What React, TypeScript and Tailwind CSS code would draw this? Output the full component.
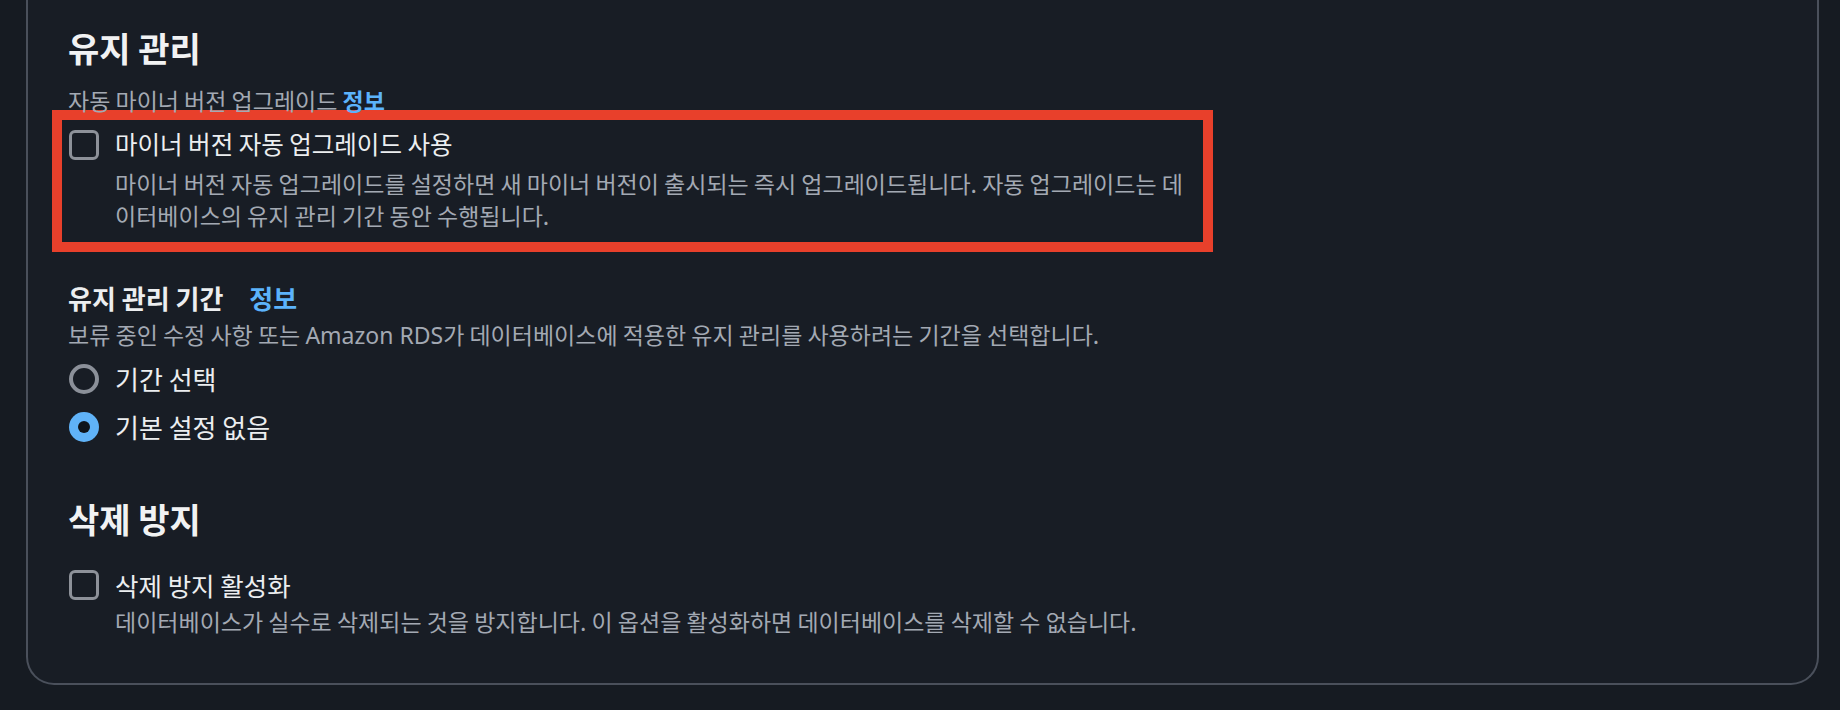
import React from "react";

function Checkbox() {
  return (
    <span className="mt-[1px] block h-[30px] w-[30px] shrink-0 rounded-[6px] border-[3px] border-[#8d9199]" />
  );
}

function Radio({ checked }: { checked?: boolean }) {
  if (checked) {
    return (
      <span className="flex h-[30px] w-[30px] shrink-0 items-center justify-center rounded-full bg-[#60b3f8]">
        <span className="h-[12px] w-[12px] rounded-full bg-[#0f141a]" />
      </span>
    );
  }
  return <span className="block h-[30px] w-[30px] shrink-0 rounded-full border-[4px] border-[#8b9099]" />;
}

export default function App() {
  return (
    <div className="min-h-screen bg-[#161b22] pl-[26px] pr-[21px] font-['Noto_Sans_CJK_KR','Noto_Sans',sans-serif]">
      <div className="rounded-b-[28px] border-2 border-t-0 border-[#4a505b] bg-[#181d25] pl-[40px] pt-[28px] pb-[46px]">
        {/* 유지 관리 */}
        <h2 className="text-[34px] leading-[40px] font-bold text-[#f1f2f3]">유지 관리</h2>
        <div className="mt-[20px] text-[23px] leading-[24px] text-[#a3a9b3]">
          자동 마이너 버전 업그레이드 <span className="font-bold text-[#5cb3fb]">정보</span>
        </div>

        {/* highlighted option */}
        <div className="-mt-[2px] -ml-[16px] w-[1161px] border-[10px] border-[#e8402b] pt-[8px] pb-[11px] pl-[7px]">
          <div className="flex gap-[16px]">
            <span className="mt-[2px] block h-[30px] w-[30px] shrink-0 rounded-[6px] border-[3px] border-[#8d9199]" />
            <div>
              <div className="text-[24.5px] leading-[32px] text-[#eceef0]">마이너 버전 자동 업그레이드 사용</div>
              <p className="mt-[7px] whitespace-nowrap text-[23px] leading-[32px] text-[#a3a9b3]">
                마이너 버전 자동 업그레이드를 설정하면 새 마이너 버전이 출시되는 즉시 업그레이드됩니다. 자동 업그레이드는 데
                <br />
                이터베이스의 유지 관리 기간 동안 수행됩니다.
              </p>
            </div>
          </div>
        </div>

        {/* 유지 관리 기간 */}
        <div className="mt-[30px] flex items-center gap-[26px] text-[26px] leading-[32px] font-bold">
          <span className="text-[#eceef0]">유지 관리 기간</span>
          <span className="text-[#5cb3fb]">정보</span>
        </div>
        <p className="mt-[4px] text-[23px] leading-[32px] text-[#a3a9b3]">
          보류 중인 수정 사항 또는 <span className="font-['Noto_Sans',sans-serif]">Amazon RDS</span>가 데이터베이스에 적용한 유지 관리를 사용하려는 기간을 선택합니다.
        </p>
        <div className="mt-[4px] flex flex-col">
          <label className="flex h-[48px] items-center gap-[16px] pl-[1px]">
            <Radio />
            <span className="text-[26px] leading-[32px] text-[#eceef0]">기간 선택</span>
          </label>
          <label className="flex h-[48px] items-center gap-[16px] pl-[1px]">
            <Radio checked />
            <span className="text-[26px] leading-[32px] text-[#eceef0]">기본 설정 없음</span>
          </label>
        </div>

        {/* 삭제 방지 */}
        <h2 className="mt-[48px] text-[34px] leading-[40px] font-bold text-[#f1f2f3]">삭제 방지</h2>
        <div className="mt-[30px] ml-[1px] flex gap-[16px]">
          <Checkbox />
          <div>
            <div className="text-[25.5px] leading-[32px] text-[#eceef0]">삭제 방지 활성화</div>
            <p className="mt-[4px] text-[23px] leading-[32px] text-[#a3a9b3]">
              데이터베이스가 실수로 삭제되는 것을 방지합니다. 이 옵션을 활성화하면 데이터베이스를 삭제할 수 없습니다.
            </p>
          </div>
        </div>
      </div>
    </div>
  );
}
